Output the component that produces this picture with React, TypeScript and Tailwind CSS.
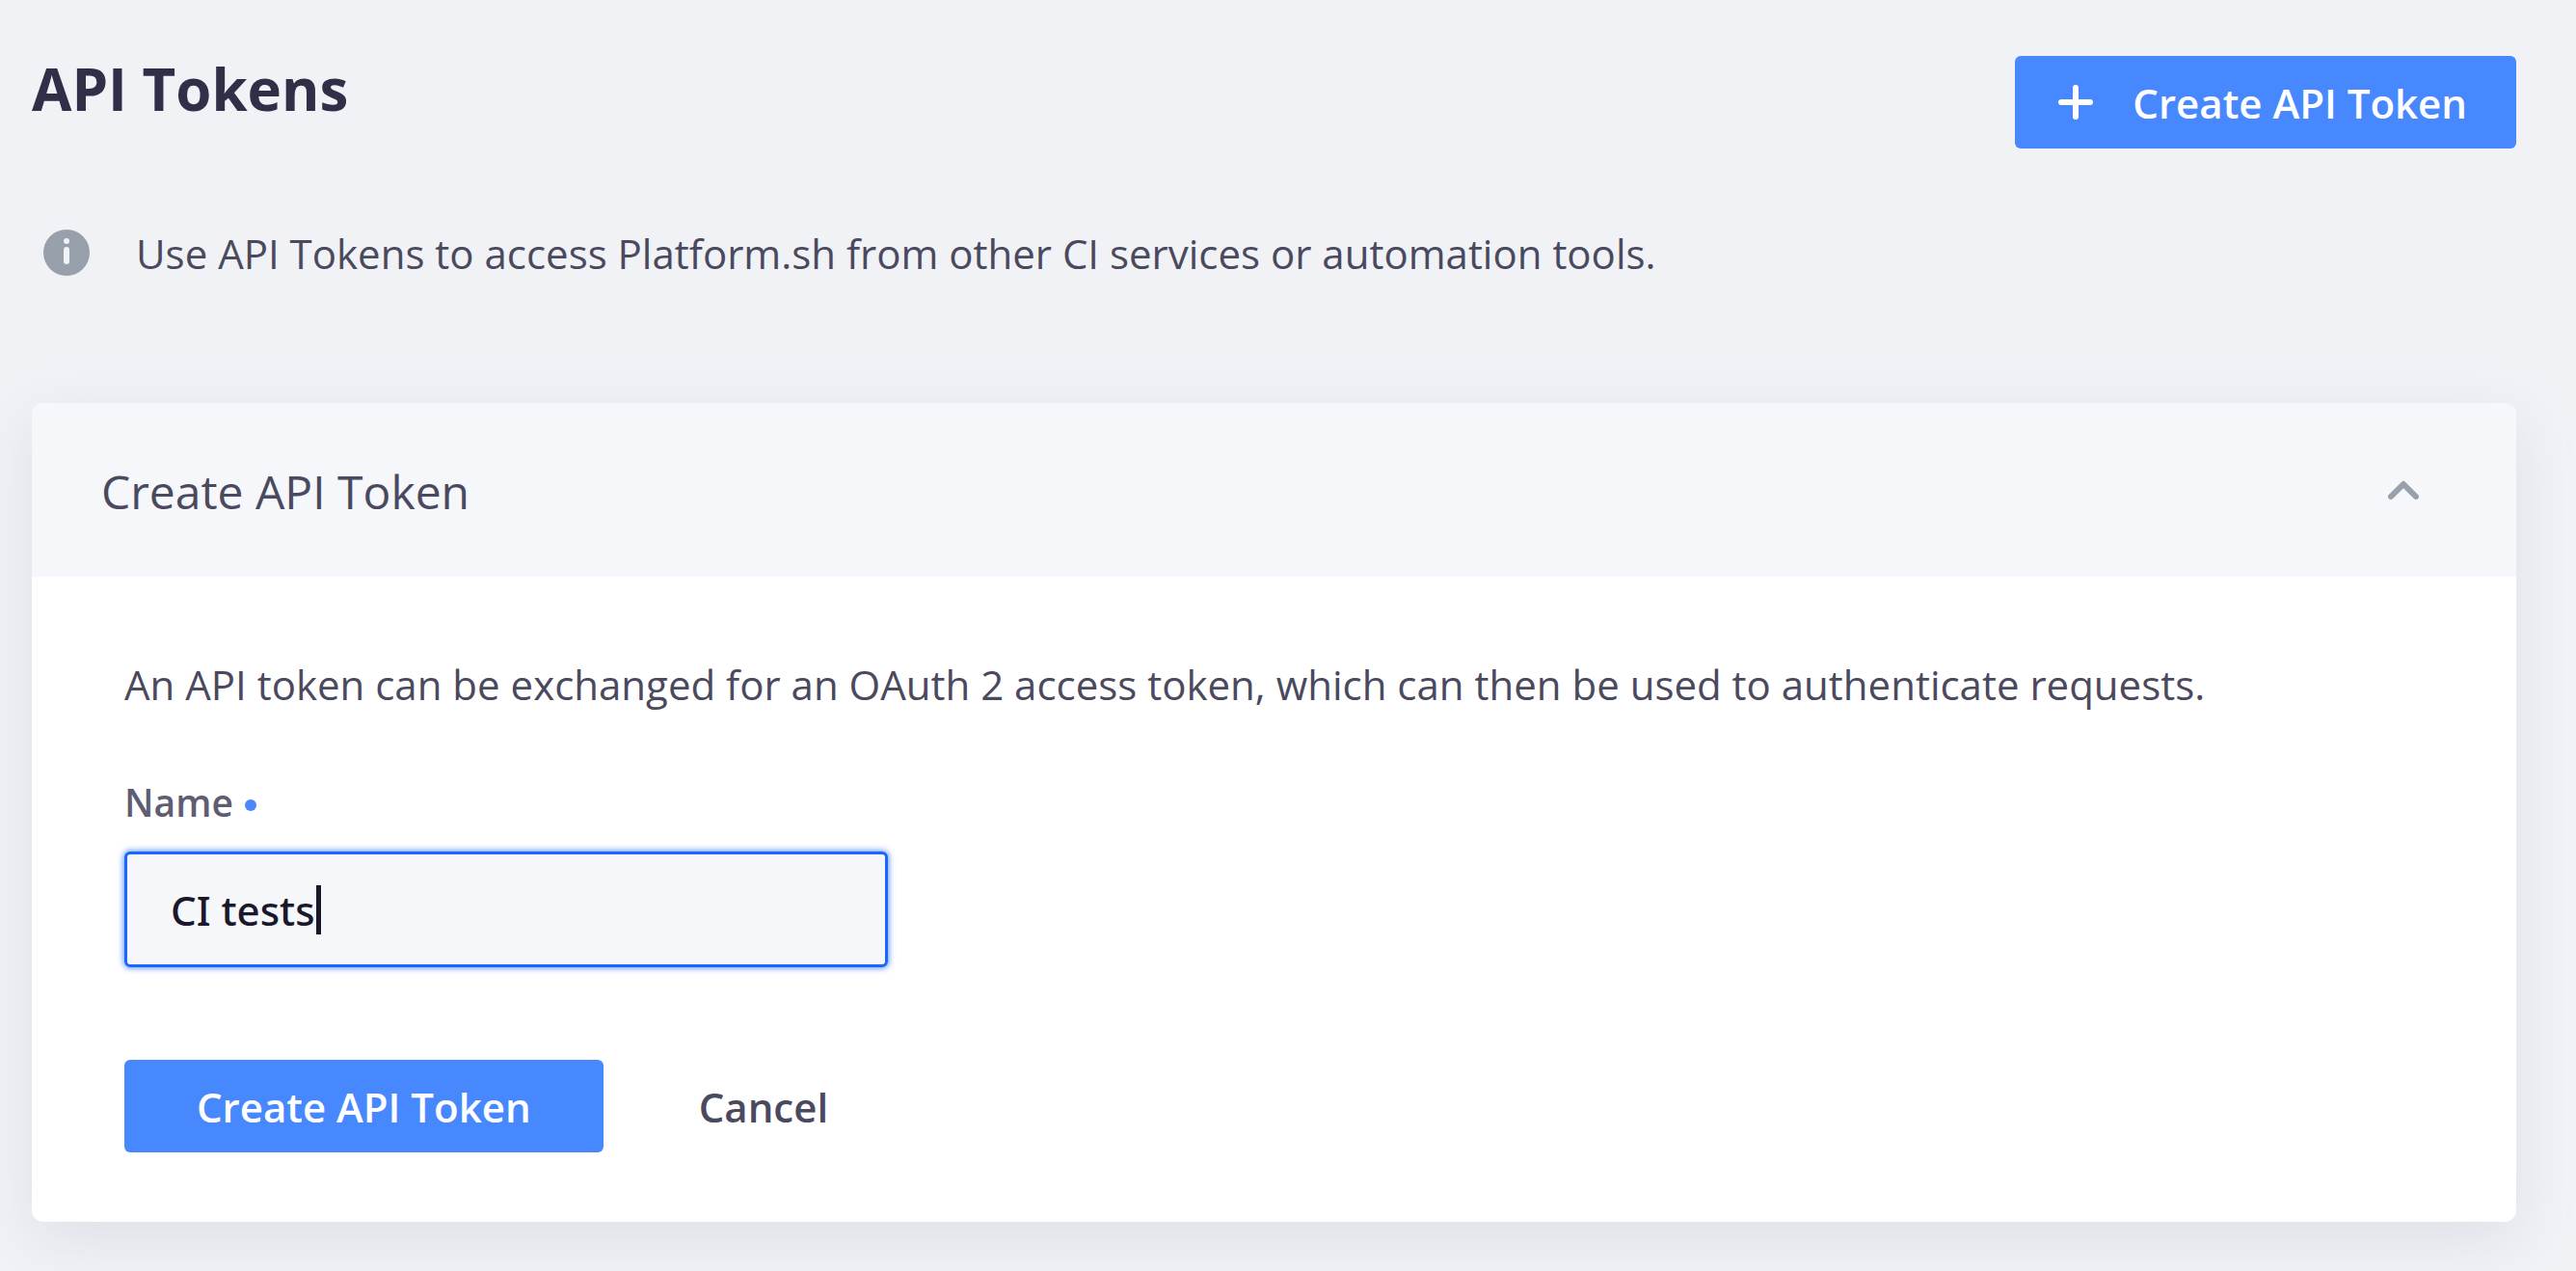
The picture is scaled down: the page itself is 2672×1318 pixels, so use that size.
import React, { useState } from "react";

export default function App() {
  const [name, setName] = useState("CI tests");
  return (
    <main className="min-h-screen bg-[#f0f2f6] pt-[54px] pr-[62px] pb-[51px] pl-[33px] font-['Open_Sans',sans-serif] text-[#4a495e]">
      <header className="flex items-start justify-between">
        <h1 className="text-[60px] leading-[76px] font-bold text-[#312f47]">API Tokens</h1>
        <button type="button" className="mt-1 flex h-24 items-center rounded-[6px] bg-[#4788ff] pr-[51px] pl-[45px] text-[42px] font-semibold text-white">
          <svg aria-hidden="true" className="mr-[41px] h-9 w-9" viewBox="0 0 36 36" fill="none" stroke="currentColor" strokeWidth="6" strokeLinecap="round">
            <path d="M18 3v30M3 18h30" />
          </svg>
          Create API Token
        </button>
      </header>
      <p className="mt-[78px] flex items-start text-[42px] leading-[62px]">
        <svg aria-hidden="true" className="mt-1.5 mr-12 ml-3 h-12 w-12" viewBox="0 0 48 48">
          <circle cx="24" cy="24" r="24" fill="#98a0ab" />
          <circle cx="24" cy="12" r="3" fill="#f0f2f6" />
          <rect x="21" y="18" width="6" height="18" rx="3" fill="#f0f2f6" />
        </svg>
        Use API Tokens to access Platform.sh from other CI services or automation tools.
      </p>
      <section className="mt-[124px] rounded-[12px] bg-white shadow-[0_18px_60px_rgba(152,165,175,0.22)]">
        <div className="flex h-[180px] items-center justify-between rounded-t-[12px] bg-[#f5f7fb] pt-1 pr-[101px] pl-[72px]">
          <h2 className="text-[48px]">Create API Token</h2>
          <button type="button" aria-label="Collapse">
            <svg className="h-8 w-8" viewBox="0 0 32 32" fill="none" stroke="#98a0ab" strokeWidth="6" strokeLinecap="round" strokeLinejoin="round">
              <path d="M3 21L16 8L29 21" />
            </svg>
          </button>
        </div>
        <form className="px-24 pt-[82px] pb-[72px]" onSubmit={(e) => e.preventDefault()}>
          <p className="text-[42px] leading-[60px]">
            An API token can be exchanged for an OAuth 2 access token, which can then be used to authenticate requests.
          </p>
          <label htmlFor="name" className="mt-16 flex items-center text-[39px] leading-[55px] font-semibold text-[#5f5d73]">
            Name
            <span className="mt-1.5 ml-3 h-3 w-3 rounded-full bg-[#4788ff]" />
          </label>
          <div className="relative mt-6 w-[792px] max-w-full">
            <input id="name" value={name} onChange={(e) => setName(e.target.value)} className="block h-[120px] w-full rounded-[6px] border-3 border-[#1a66ff] bg-[#f5f7fb] px-[45px] font-['Noto_Sans',sans-serif] text-[42px] font-medium text-[#1a192b] caret-transparent shadow-[0_0_6px_1px_rgba(26,102,255,0.7)] outline-none" />
            <span aria-hidden="true" className="absolute top-[35px] left-[199px] h-[51px] w-[5px] bg-[#1a192b]" />
          </div>
          <div className="mt-24 flex">
            <button type="submit" className="h-24 rounded-[6px] bg-[#4788ff] px-[75px] text-[42px] font-semibold text-white">Create API Token</button>
            <button type="button" className="ml-[99px] text-[42px] font-semibold">Cancel</button>
          </div>
        </form>
      </section>
    </main>
  );
}
